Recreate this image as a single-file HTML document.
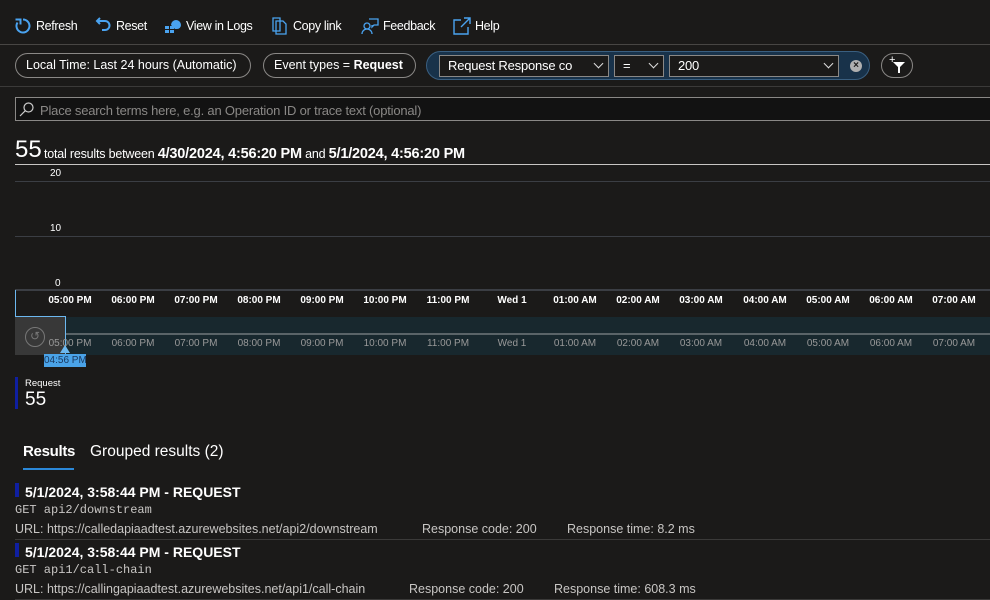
<!DOCTYPE html>
<html><head><style>
*{margin:0;padding:0;box-sizing:border-box}
body{width:990px;height:600px;background:#1b1a19;color:#fff;font-family:"Liberation Sans",sans-serif;font-size:13px;position:relative;overflow:hidden}
.a{position:absolute;white-space:nowrap}
.tb{top:19px;font-size:12.5px;letter-spacing:-0.35px;color:#fff}
.pill{position:absolute;top:53px;height:25px;border:1px solid #8a8886;border-radius:13px;font-size:12.5px;line-height:23px;padding:0 10px}
.sel{position:absolute;top:55px;height:22px;border:1px solid #8a8886;background:#1b1a19;font-size:13px;line-height:20px;padding-left:8px;letter-spacing:-0.2px}
.chev{position:absolute;right:6px;top:4px;width:7px;height:7px;border-right:1.3px solid #ddd;border-bottom:1.3px solid #ddd;transform:rotate(45deg)}
.hl{position:absolute;left:15px;right:0;height:1px}
.tk{position:absolute;font-size:10px;transform:translateX(-50%)}
.mono{font-family:"Liberation Mono",monospace;font-size:12px;color:#c8c6c4}
.bar{position:absolute;left:15px;width:4px;background:#0f1fa0}
.u{font-size:12.5px;color:#c8c6c4}
</style></head><body>
<svg class="a" style="left:14px;top:17px" width="18" height="18" viewBox="0 0 18 18"><path d="M9 2.5A6.5 6.5 0 1 1 3.5 5.5" fill="none" stroke="#4aa3f0" stroke-width="2"/><path d="M1.5 2.5h5v5" fill="none" stroke="#4aa3f0" stroke-width="2"/></svg>
<div class="a tb" style="left:36px">Refresh</div>
<svg class="a" style="left:95px;top:17px" width="16" height="18" viewBox="0 0 16 18"><path d="M3 4h7a4.5 4.5 0 0 1 0 9H7" fill="none" stroke="#4aa3f0" stroke-width="2"/><path d="M5 1L2 4l3 3" fill="none" stroke="#4aa3f0" stroke-width="2"/></svg>
<div class="a tb" style="left:116px">Reset</div>
<svg class="a" style="left:164px;top:17px" width="18" height="18" viewBox="0 0 18 18"><rect x="1" y="9" width="4" height="3" fill="#4aa3f0"/><rect x="6" y="9" width="4" height="3" fill="#4aa3f0"/><rect x="1" y="13" width="4" height="3" fill="#4aa3f0"/><rect x="6" y="13" width="4" height="3" fill="#4aa3f0"/><path d="M7 8a5 5 0 0 1 10 0v0a4 4 0 0 1-4 4h-2z" fill="#4aa3f0"/></svg>
<div class="a tb" style="left:186px">View in Logs</div>
<svg class="a" style="left:272px;top:17px" width="16" height="18" viewBox="0 0 16 18"><path d="M1 1h7v13H1z M4 4h7l3 3v10H4z" fill="none" stroke="#4aa3f0" stroke-width="1.3"/></svg>
<div class="a tb" style="left:293px">Copy link</div>
<svg class="a" style="left:361px;top:17px" width="18" height="18" viewBox="0 0 18 18"><circle cx="6" cy="9" r="3" fill="none" stroke="#4aa3f0" stroke-width="1.3"/><path d="M1 17a5 5 0 0 1 10 0M8 2h9v6h-4l-2 2V8" fill="none" stroke="#4aa3f0" stroke-width="1.3"/></svg>
<div class="a tb" style="left:383px">Feedback</div>
<svg class="a" style="left:453px;top:17px" width="18" height="18" viewBox="0 0 18 18"><path d="M8 3H1v14h14V10M11 1h6v6M17 1L8 10" fill="none" stroke="#4aa3f0" stroke-width="1.4"/></svg>
<div class="a tb" style="left:475px">Help</div>
<div class="a" style="left:0;right:0;top:44px;height:1px;background:#484644"></div>
<div class="pill" style="left:15px;width:236px">Local Time: Last 24 hours (Automatic)</div>
<div class="pill" style="left:263px;width:153px">Event types = <b>Request</b></div>
<div class="a" style="left:426px;top:51px;width:444px;height:29px;border:1px solid #3a5f80;border-radius:15px;background:#18324a"></div>
<div class="sel" style="left:439px;width:170px">Request Response co<span class="chev"></span></div>
<div class="sel" style="left:614px;width:50px">=<span class="chev"></span></div>
<div class="sel" style="left:669px;width:170px">200<span class="chev"></span></div>
<div class="a" style="left:850px;top:60px;width:12px;height:12px;border-radius:50%;background:#b0b0b0;color:#1b1a19;font-size:10px;line-height:12px;text-align:center;font-weight:bold">×</div>
<div class="a" style="left:881px;top:53px;width:32px;height:25px;border:1px solid #8a8886;border-radius:13px"></div>
<div class="a" style="left:889px;top:54px;font-size:11px">+</div>
<svg class="a" style="left:893px;top:62px" width="12" height="11" viewBox="0 0 12 11"><path d="M0 0h12L7 5v6H5V5z" fill="#fff"/></svg>
<div class="a" style="left:0;right:0;top:86px;height:1px;background:#3b3a39"></div>
<div class="a" style="left:15px;right:0;top:97px;height:24px;border:1px solid #8a8886;border-right:none;background:#121212"></div>
<svg class="a" style="left:19px;top:101px" width="16" height="16" viewBox="0 0 16 16"><circle cx="9.5" cy="6.5" r="4.5" fill="none" stroke="#ccc" stroke-width="1.2"/><path d="M6.3 9.7L1 15" stroke="#ccc" stroke-width="1.2"/></svg>
<div class="a" style="left:40px;top:103px;color:#8a8886;font-size:13px;letter-spacing:-0.2px">Place search terms here, e.g. an Operation ID or trace text (optional)</div>
<div class="a" style="left:15px;top:136px;font-size:24px">55</div>
<div class="a" style="left:44px;top:146px;font-size:12.5px;letter-spacing:-0.2px">total results between <b style="font-size:14.5px">4/30/2024, 4:56:20 PM</b> and <b style="font-size:14.5px">5/1/2024, 4:56:20 PM</b></div>
<div class="hl" style="top:164px;background:#c8c6c4"></div>
<div class="a" style="left:50px;top:168px;font-size:10px">20</div>
<div class="hl" style="top:181px;background:#3b3e44"></div>
<div class="a" style="left:50px;top:223px;font-size:10px">10</div>
<div class="hl" style="top:236px;background:#3b3e44"></div>
<div class="a" style="left:55px;top:278px;font-size:10px">0</div>
<div class="hl" style="top:289px;height:2px;background:#3b3e44"></div>
<div class="a" style="left:15px;top:290px;width:51px;height:27px;border-left:1px solid #6cb8f0;border-bottom:1px solid #6cb8f0"></div>
<div class="a" style="left:66px;right:0;top:317px;height:38px;background:#18282e"></div>
<div class="a" style="left:66px;right:0;top:333px;height:2px;background:#5a6468"></div>
<div class="a" style="left:15px;top:317px;width:51px;height:38px;background:#383838"></div>
<div class="a" style="left:65px;top:317px;width:1px;height:38px;background:#6cb8f0"></div>
<div class="a" style="left:25px;top:327px;width:20px;height:20px;border:1.5px solid #777;border-radius:50%;color:#777;font-size:12px;text-align:center;line-height:17px">↺</div>
<div class="a" style="left:60px;top:345px;width:0;height:0;border-left:5px solid transparent;border-right:5px solid transparent;border-bottom:8px solid #6cb8f0"></div>
<div class="a" style="left:44px;top:354px;width:42px;height:13px;background:#4aa3e8;color:#1b3a60;font-size:10px;line-height:13px;text-align:center">04:56 PM</div>
<div class="bar" style="top:377px;height:32px;width:3px"></div>
<div class="a" style="left:25px;top:378px;font-size:9.5px">Request</div>
<div class="a" style="left:25px;top:389px;font-size:19px">55</div>
<div class="a" style="left:23px;top:443px;font-size:15px;font-weight:bold;letter-spacing:-0.3px">Results</div>
<div class="a" style="left:90px;top:443px;font-size:15.5px">Grouped results (2)</div>
<div class="a" style="left:23px;top:468px;width:51px;height:2px;background:#2b88d8"></div>
<div class="bar" style="top:483px;height:14px"></div>
<div class="a" style="left:25px;top:484px;font-size:14px;font-weight:bold">5/1/2024, 3:58:44 PM - REQUEST</div>
<div class="a mono" style="left:15px;top:503px">GET api2/downstream</div>
<div class="a u" style="left:15px;top:522px">URL: https://calledapiaadtest.azurewebsites.net/api2/downstream</div>
<div class="a u" style="left:422px;top:522px">Response code: 200</div>
<div class="a u" style="left:567px;top:522px">Response time: 8.2 ms</div>
<div class="hl" style="top:539px;background:#3b3a39"></div>
<div class="bar" style="top:543px;height:14px"></div>
<div class="a" style="left:25px;top:544px;font-size:14px;font-weight:bold">5/1/2024, 3:58:44 PM - REQUEST</div>
<div class="a mono" style="left:15px;top:563px">GET api1/call-chain</div>
<div class="a u" style="left:15px;top:582px">URL: https://callingapiaadtest.azurewebsites.net/api1/call-chain</div>
<div class="a u" style="left:409px;top:582px">Response code: 200</div>
<div class="a u" style="left:554px;top:582px">Response time: 608.3 ms</div>
<div class="hl" style="top:599px;background:#3b3a39"></div>
<div class="a" style="left:0;top:0">
<div class="tk" style="left:70px;top:295px;font-weight:bold">05:00 PM</div><div class="tk" style="left:133px;top:295px;font-weight:bold">06:00 PM</div><div class="tk" style="left:196px;top:295px;font-weight:bold">07:00 PM</div><div class="tk" style="left:259px;top:295px;font-weight:bold">08:00 PM</div><div class="tk" style="left:322px;top:295px;font-weight:bold">09:00 PM</div><div class="tk" style="left:385px;top:295px;font-weight:bold">10:00 PM</div><div class="tk" style="left:448px;top:295px;font-weight:bold">11:00 PM</div><div class="tk" style="left:512px;top:295px;font-weight:bold">Wed 1</div><div class="tk" style="left:575px;top:295px;font-weight:bold">01:00 AM</div><div class="tk" style="left:638px;top:295px;font-weight:bold">02:00 AM</div><div class="tk" style="left:701px;top:295px;font-weight:bold">03:00 AM</div><div class="tk" style="left:765px;top:295px;font-weight:bold">04:00 AM</div><div class="tk" style="left:828px;top:295px;font-weight:bold">05:00 AM</div><div class="tk" style="left:891px;top:295px;font-weight:bold">06:00 AM</div><div class="tk" style="left:954px;top:295px;font-weight:bold">07:00 AM</div>
<div class="tk" style="left:70px;top:338px;color:#999">05:00 PM</div><div class="tk" style="left:133px;top:338px;color:#999">06:00 PM</div><div class="tk" style="left:196px;top:338px;color:#999">07:00 PM</div><div class="tk" style="left:259px;top:338px;color:#999">08:00 PM</div><div class="tk" style="left:322px;top:338px;color:#999">09:00 PM</div><div class="tk" style="left:385px;top:338px;color:#999">10:00 PM</div><div class="tk" style="left:448px;top:338px;color:#999">11:00 PM</div><div class="tk" style="left:512px;top:338px;color:#999">Wed 1</div><div class="tk" style="left:575px;top:338px;color:#999">01:00 AM</div><div class="tk" style="left:638px;top:338px;color:#999">02:00 AM</div><div class="tk" style="left:701px;top:338px;color:#999">03:00 AM</div><div class="tk" style="left:765px;top:338px;color:#999">04:00 AM</div><div class="tk" style="left:828px;top:338px;color:#999">05:00 AM</div><div class="tk" style="left:891px;top:338px;color:#999">06:00 AM</div><div class="tk" style="left:954px;top:338px;color:#999">07:00 AM</div>
</div>
</body></html>
